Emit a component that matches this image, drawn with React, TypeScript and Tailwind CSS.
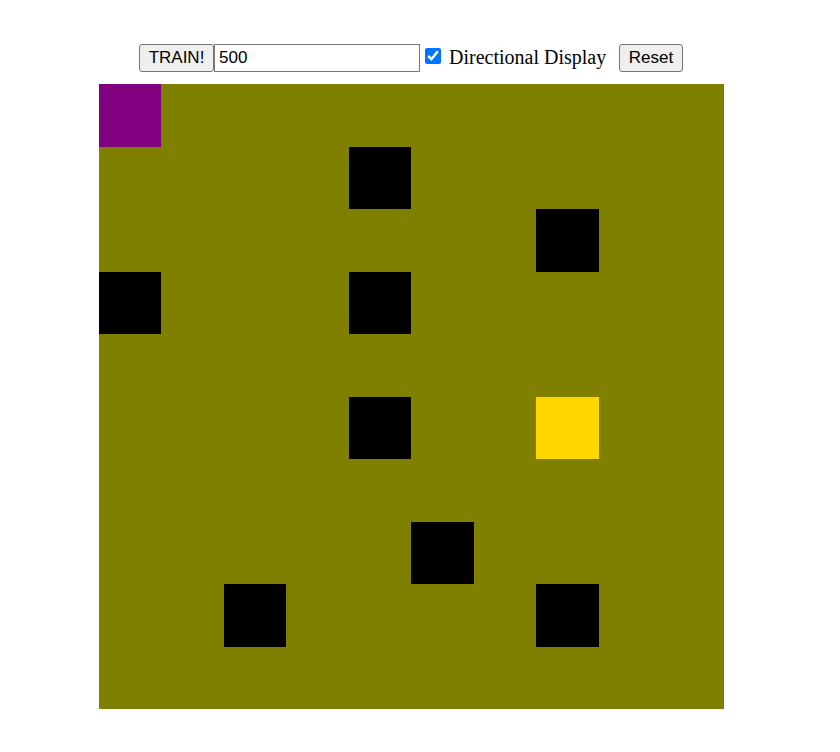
const SIZE = 10;
const WALLS = new Set([14, 27, 30, 34, 54, 75, 82, 87]);
const START = 0;
const GOAL = 57;

function cellColor(i: number): string {
  if (i === START) return 'bg-[#800080]';
  if (i === GOAL) return 'bg-[#ffd700]';
  return WALLS.has(i) ? 'bg-black' : 'bg-[#808000]';
}

const control =
  'h-7 border border-[#767676] font-["Liberation_Sans",Arial,sans-serif] text-[17px] leading-5 text-black';

export default function App() {
  return (
    <main className="flex flex-col items-center bg-white pr-[18px] pt-11 pb-10 font-['Liberation_Serif','Times_New_Roman',serif] text-[20px] leading-6 text-black">
      <div className="flex h-7 items-center">
        <button type="button" className={`${control} w-[75px] rounded-[3px] bg-[#efefef]`}>
          TRAIN!
        </button>
        <input
          type="text"
          aria-label="Training episodes"
          defaultValue="500"
          className={`${control} w-[206px] bg-white px-1`}
        />
        <div className="flex items-baseline pb-0.5">
          <input
            id="directional"
            type="checkbox"
            defaultChecked
            className="mr-2 ml-[5px] size-4"
          />
          <label htmlFor="directional" className="w-[158px] whitespace-nowrap">
            Directional Display
          </label>
        </div>
        <button type="button" className={`${control} ml-3 w-16 rounded-[3px] bg-[#efefef]`}>
          Reset
        </button>
      </div>
      <div className="mt-3 grid aspect-square w-full max-w-[625px] grid-cols-10 grid-rows-10 bg-[#808000]">
        {Array.from({ length: SIZE * SIZE }, (_, i) => (
          <div key={i} className={cellColor(i)} />
        ))}
      </div>
    </main>
  );
}
